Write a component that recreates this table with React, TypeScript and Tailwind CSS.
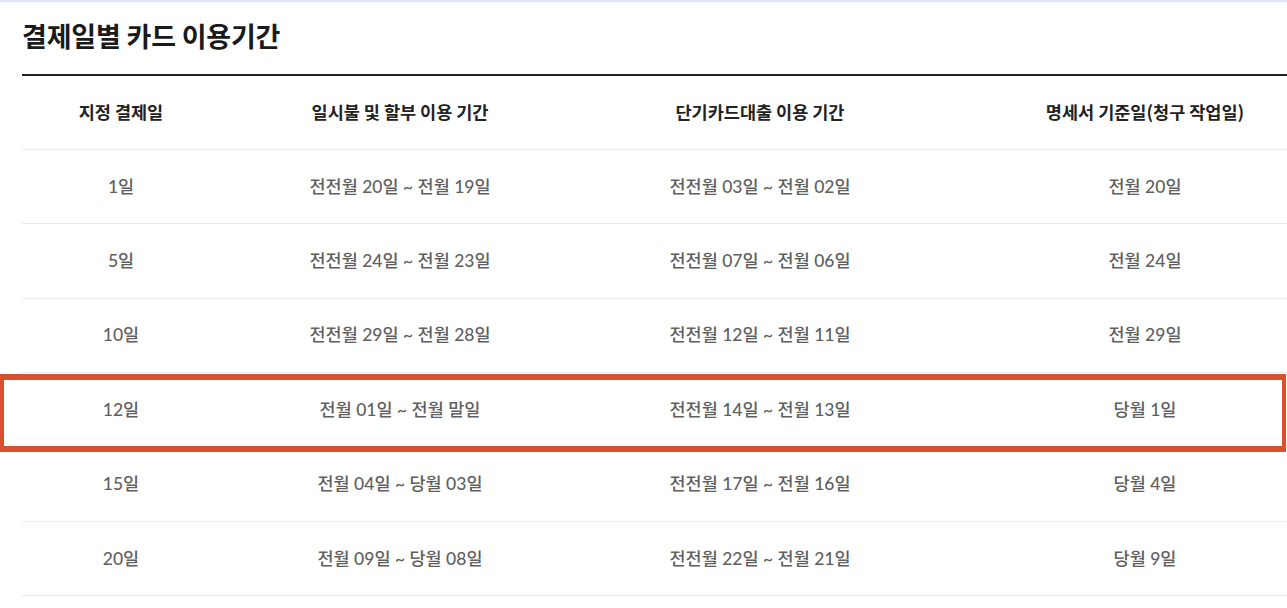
const rows = [
  ['1일', '전전월 20일 ~ 전월 19일', '전전월 03일 ~ 전월 02일', '전월 20일'],
  ['5일', '전전월 24일 ~ 전월 23일', '전전월 07일 ~ 전월 06일', '전월 24일'],
  ['10일', '전전월 29일 ~ 전월 28일', '전전월 12일 ~ 전월 11일', '전월 29일'],
  ['12일', '전월 01일 ~ 전월 말일', '전전월 14일 ~ 전월 13일', '당월 1일'],
  ['15일', '전월 04일 ~ 당월 03일', '전전월 17일 ~ 전월 16일', '당월 4일'],
  ['20일', '전월 09일 ~ 당월 08일', '전전월 22일 ~ 전월 21일', '당월 9일'],
]

const headers = ['지정 결제일', '일시불 및 할부 이용 기간', '단기카드대출 이용 기간', '명세서 기준일(청구 작업일)']
const widths = ['w-[198px]', 'w-[360px]', 'w-[360px]', 'w-[410px]']

export default function App() {
  return (
    <div
      className="relative w-[1287px] h-[608px] overflow-hidden bg-white"
      style={{ fontFamily: '"Noto Sans CJK KR", "Noto Sans", sans-serif' }}
    >
      <div className="h-[2px] bg-[#dde9fb]" />
      <div className="pl-[22px]">
        <h2 className="pt-[17px] pb-[21px] text-[27px] font-bold leading-[34px] text-[#1a1a1a] tracking-[-0.2px]">
          결제일별 카드 이용기간
        </h2>
        <div className="w-[1328px] border-t-2 border-[#222]">
          <div className="flex h-[74px] items-center border-b border-[#ececec]">
            {headers.map((h, i) => (
              <div key={h} className={`${widths[i]} text-center text-[17.5px] font-bold text-[#222]`}>
                {h}
              </div>
            ))}
          </div>
          {rows.map((r) => (
            <div key={r[0]} className="flex h-[74.4px] items-center border-b border-[#ececec]">
              {r.map((c, i) => (
                <div
                  key={i}
                  className={`${widths[i]} text-center text-[17.5px] font-medium text-[#5f5f5f]`}
                  style={{ fontFamily: 'Lato, "Noto Sans CJK KR", sans-serif' }}
                >
                  {c}
                </div>
              ))}
            </div>
          ))}
        </div>
      </div>
      {/* 12일 강조 박스 */}
      <div className="absolute left-0 top-[374px] h-[78px] w-[1286px] border-x-4 border-y-[6px] border-[#d9502c]" />
    </div>
  )
}
